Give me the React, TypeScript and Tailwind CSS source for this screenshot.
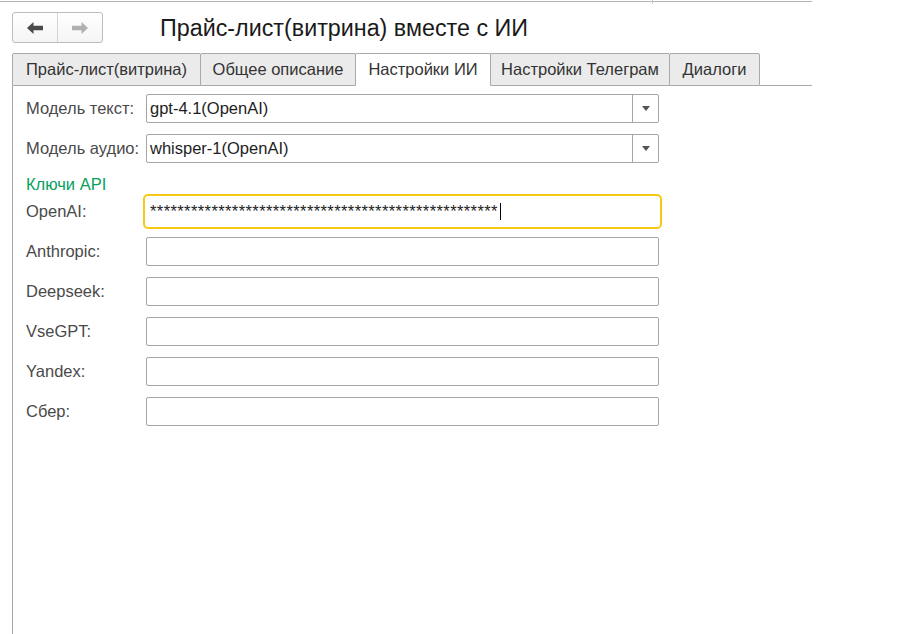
import { ReactNode } from "react";

const TABS = [
  { label: "Прайс-лист(витрина)", w: "w-[189px]" },
  { label: "Общее описание", w: "w-[156px]" },
  { label: "Настройки ИИ", w: "w-[136px]", active: true },
  { label: "Настройки Телеграм", w: "w-[180px]" },
  { label: "Диалоги", w: "w-[91px]" },
];

const KEYS = ["Anthropic:", "Deepseek:", "VseGPT:", "Yandex:", "Сбер:"];

function Row({ label, children, className = "" }: { label: string; children: ReactNode; className?: string }) {
  return (
    <div className={`flex h-[29px] items-center ${className}`}>
      <div className="w-[120px] shrink-0 text-[16.5px] text-[#4a4a4a]">{label}</div>
      {children}
    </div>
  );
}

function Select({ value }: { value: string }) {
  return (
    <div className="flex h-[29px] w-[513px] rounded-[2px] border border-[#a6a6a6] bg-white">
      <div className="flex-1 truncate pl-[3px] text-[16.5px] leading-[27px] text-[#1e1e1e]">{value}</div>
      <div className="flex w-[26px] items-center justify-center border-l border-[#a6a6a6]">
        <svg width="8" height="5" viewBox="0 0 8 5">
          <path d="M0 0h8L4 5z" fill="#555" />
        </svg>
      </div>
    </div>
  );
}

function TextBox({ children, focused }: { children?: ReactNode; focused?: boolean }) {
  return (
    <div
      className={`flex h-[29px] w-[513px] items-center rounded-[2px] border bg-white pl-[3px] text-[16.5px] text-[#1e1e1e] ${
        focused ? "border-transparent outline-2 outline-offset-[1px] outline-[#f7c914]" : "border-[#a6a6a6]"
      }`}
    >
      {children}
    </div>
  );
}

export default function App() {
  return (
    <div className="relative h-[634px] w-[900px] overflow-hidden bg-white font-['Liberation_Sans',Arial,sans-serif]">
      <div className="absolute left-[652px] top-0 h-[4px] w-px bg-[#c8c8c8]" />
      <div className="mt-px w-[812px] border-t border-[#b4b4b4]">
        <div className="flex items-center pl-3 pt-[10px]">
          <div className="flex h-[31px] w-[91px] rounded-[3px] border border-[#bdbdbd] bg-gradient-to-b from-white to-[#f5f5f5]">
            <button className="flex w-[45px] items-center justify-center border-r border-[#d4d4d4]">
              <svg width="16" height="12" viewBox="0 0 16 12">
                <path d="M0 6L6.5 0v3.8H16v4.4H6.5V12z" fill="#4a4a4a" />
              </svg>
            </button>
            <button className="flex flex-1 items-center justify-center">
              <svg width="16" height="12" viewBox="0 0 16 12">
                <path d="M16 6L9.5 0v3.8H0v4.4h9.5V12z" fill="#b0b0b0" />
              </svg>
            </button>
          </div>
          <h1 className="ml-[57px] text-[23.3px] leading-[26px] text-[#1a1a1a]">Прайс-лист(витрина) вместе с ИИ</h1>
        </div>

        <div className="mt-[10px] flex pl-3">
          {TABS.map((t, i) => (
            <div
              key={t.label}
              className={`flex h-[33px] ${t.w} ${i > 0 ? "-ml-px" : ""} items-center justify-center rounded-t-[2px] border text-[16.5px] text-[#333] ${
                t.active ? "relative z-10 border-[#a9a9a9] border-b-white bg-white" : "border-[#a9a9a9] bg-[#ebebeb]"
              }`}
            >
              {t.label}
            </div>
          ))}
          <div className="flex-1 border-b border-[#a9a9a9]" />
        </div>
      </div>

      <div className="ml-3 h-[560px] border-l border-[#a9a9a9] pl-[13px] pt-[8px]">
        <Row label="Модель текст:" className="mb-[11px]">
          <Select value="gpt-4.1(OpenAI)" />
        </Row>
        <Row label="Модель аудио:" className="mb-[10px]">
          <Select value="whisper-1(OpenAI)" />
        </Row>
        <div className="mb-[4px] h-[20px] pt-px text-[16.5px] leading-[20px] text-[#05a060]">Ключи API</div>
        <Row label="OpenAI:" className="mb-[11px]">
          <TextBox focused>
            <span className="tracking-[0.4px]">{"*".repeat(51)}</span>
            <span className="ml-[2px] h-[17px] w-px bg-black" />
          </TextBox>
        </Row>
        {KEYS.map((k) => (
          <Row key={k} label={k} className="mb-[11px]">
            <TextBox />
          </Row>
        ))}
      </div>
    </div>
  );
}
